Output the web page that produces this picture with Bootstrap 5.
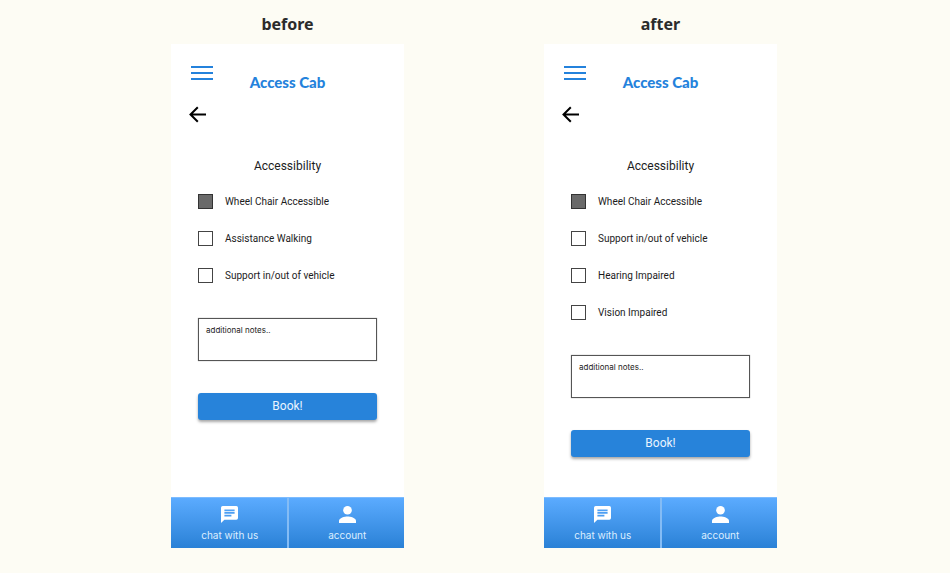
<!DOCTYPE html>
<html lang="en">
<head>
<meta charset="utf-8">
<meta name="viewport" content="width=device-width, initial-scale=1">
<title>Access Cab – before and after</title>
<link href="https://cdn.jsdelivr.net/npm/bootstrap@5.3.0/dist/css/bootstrap.min.css" rel="stylesheet">
<style>
body { background: #fdfcf4; font-family: Roboto, "Liberation Sans", sans-serif; color: #1c1c1c; }
.compare { column-gap: 140px; row-gap: 24px; padding: 12px 2px 24px 0; }
.version { flex: 0 1 233px; }
.version-name { font: 700 16px/24px "Noto Sans", sans-serif; color: #2b2b2b; margin-bottom: 8px; }
.phone { background: #fff; min-height: 504px; }
.phone-head { padding: 22px 20px 0; }
.plain { background: none; border: 0; padding: 0; line-height: 0; }
.head-side { width: 22px; }
.brand { font: 900 15px/20px Lato, sans-serif; color: #2482dc; margin: 6px 0 0; }
.back { margin: 14px 18px 0; }
.form-area { padding: 33px 27px 32px; }
.form-title { font-size: 12px; font-weight: 400; line-height: 20px; margin-bottom: 18px; }
.options { gap: 22px; margin-bottom: 35px; }
.option { gap: 12px; font-size: 10px; line-height: 15px; }
.option .form-check-input { width: 15px; height: 15px; margin: 0; border: 1px solid #444; border-radius: 0; background: #fff; }
.option .form-check-input:checked { background: #6a6a6a; border-color: #333; }
.notes { height: 43px; min-height: 43px; resize: none; border: 1px solid #555; border-radius: 0; padding: 5px 7px; font-family: Inter, sans-serif; font-size: 8px; line-height: 12px; color: #1c1c1c; margin-bottom: 32px; box-shadow: 0 0 1px #999; }
.notes::placeholder { color: #1c1c1c; }
.book { background: #2783da; color: #e9f4ff; border: 0; border-radius: 3px; padding: 4px; font-size: 12px; line-height: 19px; box-shadow: 0 2px 3px #00000059; }
.book:hover { background: #1e74c6; color: #fff; }
.tabs { background: linear-gradient(#5babff, #2a81d6); border-top: 1px solid #7dbcff; }
.tab-link { flex: 1 1 0; padding: 8px 0 5px 2px; gap: 4px; font-family: Inter, sans-serif; font-size: 10px; line-height: 16px; color: #dceeff; text-decoration: none; }
.tab-link + .tab-link { border-left: 2px solid #84bcf5; }
</style>
<script src="https://cdn.jsdelivr.net/npm/bootstrap@5.3.0/dist/js/bootstrap.bundle.min.js"></script>
</head>
<body>
<svg class="d-none" aria-hidden="true">
  <symbol id="i-menu" viewBox="0 0 22 14"><path d="M0 1h22M0 7h22M0 13h22" stroke="#2482dc" stroke-width="2.2"/></symbol>
  <symbol id="i-back" viewBox="0 0 17 17"><path d="M17 8.500H2M8.800 1.200 1.500 8.500l7.300 7.300" fill="none" stroke="#000" stroke-width="2"/></symbol>
  <symbol id="i-chat" viewBox="0 0 17 17"><path fill="#fff" fill-rule="evenodd" d="M1.700 0h13.600A1.700 1.700 0 0 1 17 1.700v10.300a1.700 1.700 0 0 1-1.700 1.700H3.400L0 17V1.700A1.700 1.700 0 0 1 1.700 0zM3.400 3.500v1.700h10.200V3.500zm0 2.600v1.700h10.200V6.100zm0 2.600v1.700h7V8.700z"/></symbol>
  <symbol id="i-user" viewBox="0 0 17 17"><circle cx="8.500" cy="4.300" r="4.300" fill="#fff"/><path fill="#fff" d="M0 17v-2.100c0-2.900 5.700-4.300 8.500-4.300s8.500 1.400 8.500 4.300V17z"/></symbol>
</svg>
<main class="compare d-flex flex-wrap justify-content-center">
  <section class="version">
    <h2 class="version-name text-center">before</h2>
    <div class="phone d-flex flex-column">
      <header class="phone-head d-flex align-items-start">
        <button class="plain head-side" type="button" aria-label="Menu"><svg width="22" height="14"><use href="#i-menu"/></svg></button>
        <h3 class="brand flex-grow-1 text-center">Access Cab</h3>
        <span class="head-side"></span>
      </header>
      <button class="plain back align-self-start" type="button" aria-label="Back"><svg width="17" height="17"><use href="#i-back"/></svg></button>
      <form class="form-area">
        <h4 class="form-title text-center">Accessibility</h4>
        <div class="options d-flex flex-column">
          <div class="option d-flex align-items-center"><input class="form-check-input" type="checkbox" id="b1" checked><label for="b1">Wheel Chair Accessible</label></div>
          <div class="option d-flex align-items-center"><input class="form-check-input" type="checkbox" id="b2"><label for="b2">Assistance Walking</label></div>
          <div class="option d-flex align-items-center"><input class="form-check-input" type="checkbox" id="b3"><label for="b3">Support in/out of vehicle</label></div>
        </div>
        <textarea class="notes form-control" aria-label="Additional notes" placeholder="additional notes.."></textarea>
        <button class="book btn w-100" type="button">Book!</button>
      </form>
      <nav class="tabs d-flex mt-auto">
        <a class="tab-link d-flex flex-column align-items-center" href="#"><svg width="17" height="17"><use href="#i-chat"/></svg>chat with us</a>
        <a class="tab-link d-flex flex-column align-items-center" href="#"><svg width="17" height="17"><use href="#i-user"/></svg>account</a>
      </nav>
    </div>
  </section>
  <section class="version">
    <h2 class="version-name text-center">after</h2>
    <div class="phone d-flex flex-column">
      <header class="phone-head d-flex align-items-start">
        <button class="plain head-side" type="button" aria-label="Menu"><svg width="22" height="14"><use href="#i-menu"/></svg></button>
        <h3 class="brand flex-grow-1 text-center">Access Cab</h3>
        <span class="head-side"></span>
      </header>
      <button class="plain back align-self-start" type="button" aria-label="Back"><svg width="17" height="17"><use href="#i-back"/></svg></button>
      <form class="form-area">
        <h4 class="form-title text-center">Accessibility</h4>
        <div class="options d-flex flex-column">
          <div class="option d-flex align-items-center"><input class="form-check-input" type="checkbox" id="a1" checked><label for="a1">Wheel Chair Accessible</label></div>
          <div class="option d-flex align-items-center"><input class="form-check-input" type="checkbox" id="a2"><label for="a2">Support in/out of vehicle</label></div>
          <div class="option d-flex align-items-center"><input class="form-check-input" type="checkbox" id="a3"><label for="a3">Hearing Impaired</label></div>
          <div class="option d-flex align-items-center"><input class="form-check-input" type="checkbox" id="a4"><label for="a4">Vision Impaired</label></div>
        </div>
        <textarea class="notes form-control" aria-label="Additional notes" placeholder="additional notes.."></textarea>
        <button class="book btn w-100" type="button">Book!</button>
      </form>
      <nav class="tabs d-flex mt-auto">
        <a class="tab-link d-flex flex-column align-items-center" href="#"><svg width="17" height="17"><use href="#i-chat"/></svg>chat with us</a>
        <a class="tab-link d-flex flex-column align-items-center" href="#"><svg width="17" height="17"><use href="#i-user"/></svg>account</a>
      </nav>
    </div>
  </section>
</main>
</body>
</html>
